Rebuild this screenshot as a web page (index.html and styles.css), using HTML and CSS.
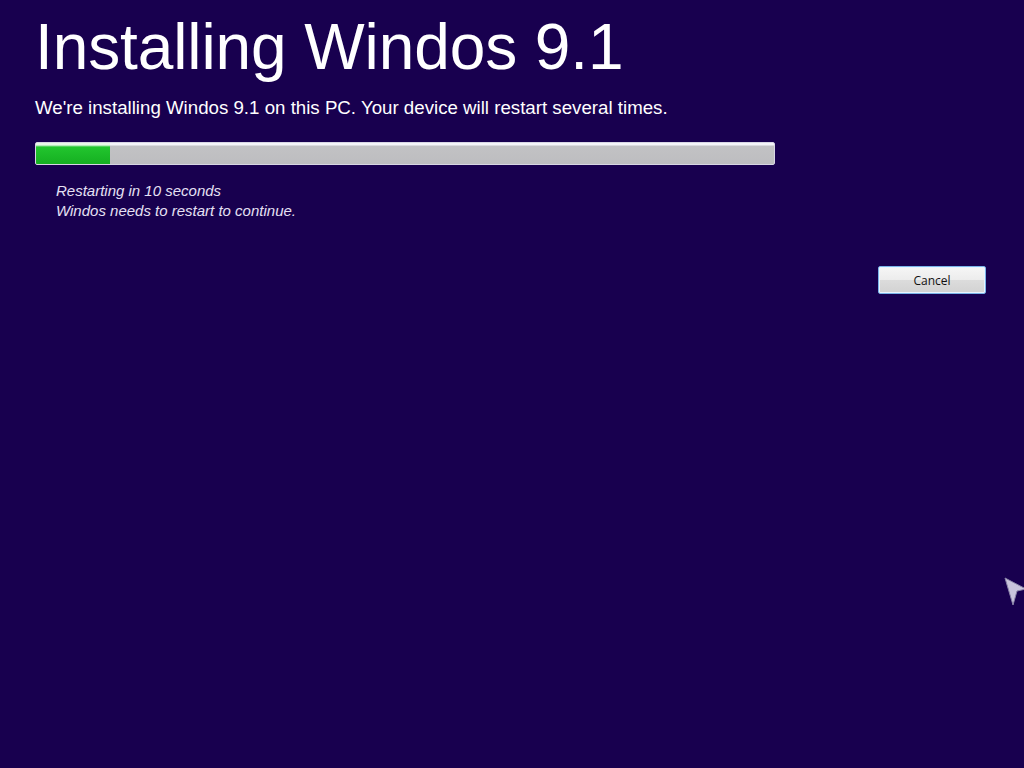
FILE: index.html
```html
<!DOCTYPE html>
<html lang="en">
<head>
  <meta charset="UTF-8" />
  <title>Installing Windos 9.1</title>
  <link rel="stylesheet" href="styles.css">
</head>
<body>
  <div class="setup">
    <h1 class="title">Installing Windos 9.1</h1>
    <p class="lead">We're installing Windos 9.1 on this PC. Your device will restart several times.</p>

    <div class="progress">
      <div class="progress-fill" style="width: 10%;"></div>
    </div>

    <div class="status">
      <div>Restarting in 10 seconds</div>
      <div>Windos needs to restart to continue.</div>
    </div>

    <div class="actions">
      <button class="btn">Cancel</button>
    </div>
  </div>

  <!-- mouse pointer at the right edge -->
  <svg class="pointer" width="24" height="30" viewBox="0 0 24 30">
    <path d="M1 1 L22 12 L13 14 L9 28 Z" fill="#c9c4dc" stroke="#8a84a8" stroke-width="1"/>
  </svg>
</body>
</html>
```

FILE: styles.css
```css
html, body {
  margin: 0;
  height: 100%;
}

body {
  background: #18004f;
  font-family: "Liberation Sans", Arial, sans-serif;
  color: #fff;
  overflow: hidden;
  position: relative;
}

.setup {
  padding: 15px 38px 0 35px;
}

.title {
  margin: 0;
  font-size: 64px;
  font-weight: normal;
  line-height: 64px;
  letter-spacing: -0.1px;
}

.lead {
  margin: 18px 0 0;
  font-size: 18.7px;
  line-height: 22px;
}

.progress {
  margin-top: 23px;
  width: 738px;
  height: 21px;
  background: linear-gradient(#f4f4f8 0, #f4f4f8 2px, #c2c2c4 3px, #bdbdc0 100%);
  border: 1px solid #d8d6e4;
  border-radius: 2px;
  box-sizing: content-box;
  overflow: hidden;
}

.progress-fill {
  height: 100%;
  background: linear-gradient(#e8f8e8 0, #e8f8e8 2px, #22c52e 4px, #15b021 100%);
}

.status {
  margin: 16px 0 0 21px;
  font-size: 15px;
  font-style: italic;
  line-height: 20px;
  color: #e6e0f4;
}

.actions {
  display: flex;
  justify-content: flex-end;
  margin-top: 45px;
}

.btn {
  width: 108px;
  height: 28px;
  font-family: "Open Sans", "DejaVu Sans", sans-serif;
  font-size: 12px;
  color: #111;
  background: linear-gradient(#f6f6f6 0, #ececec 50%, #dcdcdc 51%, #d2d2d2 100%);
  border: 1px solid #7ab4e8;
  border-radius: 2px;
  box-shadow: inset 0 0 0 1px #e8f4ff;
  padding: 0;
}

.pointer {
  position: absolute;
  left: 1004px;
  top: 577px;
}
```
